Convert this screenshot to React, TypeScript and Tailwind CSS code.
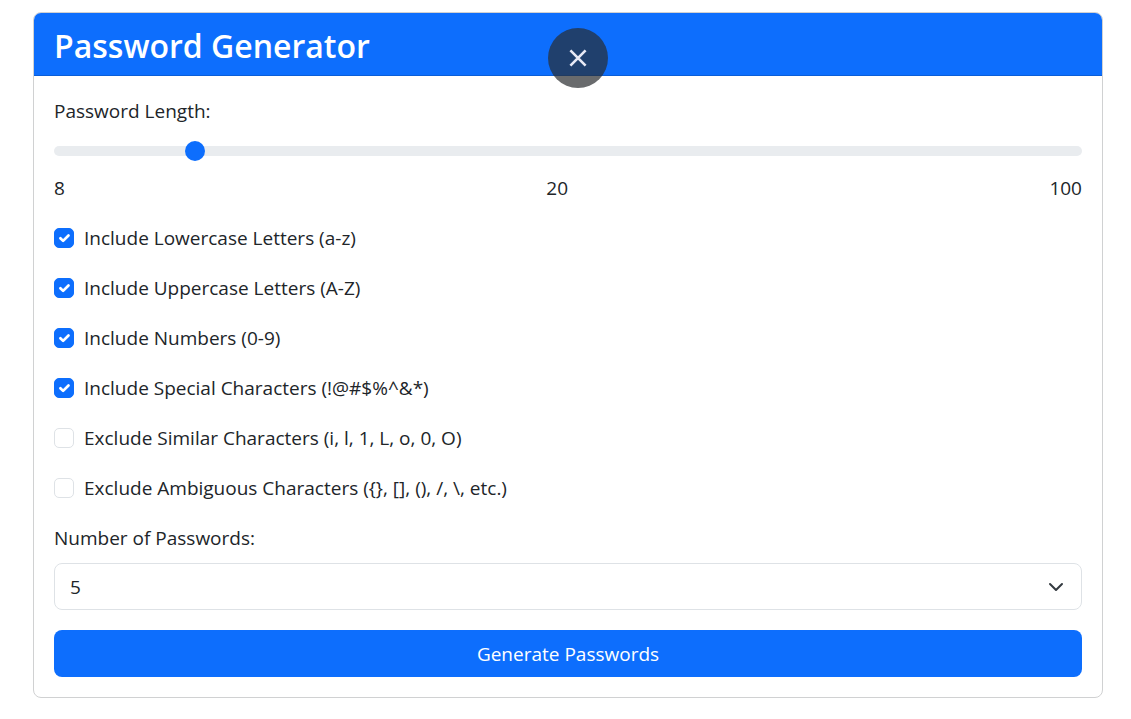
import { useState } from "react";

type Option = { id: string; label: string; checked: boolean };

const OPTIONS: Option[] = [
  { id: "lowercase", label: "Include Lowercase Letters (a-z)", checked: true },
  { id: "uppercase", label: "Include Uppercase Letters (A-Z)", checked: true },
  { id: "numbers", label: "Include Numbers (0-9)", checked: true },
  { id: "special", label: "Include Special Characters (!@#$%^&*)", checked: true },
  { id: "similar", label: "Exclude Similar Characters (i, l, 1, L, o, 0, O)", checked: false },
  { id: "ambiguous", label: "Exclude Ambiguous Characters ({}, [], (), /, \\, etc.)", checked: false },
];

function CheckRow({ id, label, checked }: Option) {
  return (
    <div className="flex items-center gap-[10px]">
      <span className="grid size-5 shrink-0">
        <input
          id={id}
          type="checkbox"
          defaultChecked={checked}
          className="peer col-start-1 row-start-1 size-5 appearance-none rounded-[5px] border border-[#dee2e6] bg-white checked:border-[#0d6efd] checked:bg-[#0d6efd]"
        />
        <svg
          viewBox="0 0 20 20"
          fill="none"
          aria-hidden="true"
          className="pointer-events-none invisible col-start-1 row-start-1 size-5 peer-checked:visible"
        >
          <path
            d="m6.4 10.2 2.7 2.7 5.4-5.4"
            stroke="white"
            strokeWidth="2.7"
            strokeLinecap="round"
            strokeLinejoin="round"
          />
        </svg>
      </span>
      <label htmlFor={id} className="leading-[30px]">
        {label}
      </label>
    </div>
  );
}

export default function App() {
  const [length, setLength] = useState(20);

  return (
    <div className="relative pt-3 pr-7 pb-5 pl-[33px] font-['Open_Sans','Noto_Sans',sans-serif] text-[19px] leading-[30px] text-[#212529]">
      <main className="overflow-hidden rounded-lg border border-[#d0d1d2] bg-white">
        <header className="border-b border-[#0b5ed7] bg-[#0d6efd] px-5 pt-3 pb-2 text-white">
          <h1 className="text-[32px] leading-[42px] font-semibold">Password Generator</h1>
        </header>
        <form className="flex flex-col gap-5 p-5" onSubmit={(e) => e.preventDefault()}>
          <div className="flex flex-col">
            <label htmlFor="length">Password Length:</label>
            <input
              id="length"
              type="range"
              min={8}
              max={100}
              value={length}
              onChange={(e) => setLength(Number(e.target.value))}
              className="mt-[10px] mb-[7px] h-[30px] w-full appearance-none bg-transparent [&::-webkit-slider-runnable-track]:h-[10px] [&::-webkit-slider-runnable-track]:rounded-full [&::-webkit-slider-runnable-track]:bg-[#e9ecef] [&::-webkit-slider-thumb]:-mt-[5px] [&::-webkit-slider-thumb]:size-5 [&::-webkit-slider-thumb]:appearance-none [&::-webkit-slider-thumb]:rounded-full [&::-webkit-slider-thumb]:bg-[#0d6efd]"
            />
            <div className="flex justify-between">
              <span>8</span>
              <output htmlFor="length">{length}</output>
              <span>100</span>
            </div>
          </div>
          {OPTIONS.map((option) => (
            <CheckRow key={option.id} {...option} />
          ))}
          <div className="flex flex-col gap-[10px]">
            <label htmlFor="count">Number of Passwords:</label>
            <div className="grid items-center">
              <select
                id="count"
                defaultValue="5"
                className="col-start-1 row-start-1 h-[47px] w-full appearance-none rounded-lg border border-[#dee2e6] bg-white pr-12 pl-[15px]"
              >
                <option>1</option>
                <option>5</option>
                <option>10</option>
                <option>20</option>
              </select>
              <svg
                viewBox="0 0 16 16"
                fill="none"
                aria-hidden="true"
                className="pointer-events-none col-start-1 row-start-1 mr-[18px] size-4 justify-self-end"
              >
                <path
                  d="m2 5 6 6 6-6"
                  stroke="#343a40"
                  strokeWidth="2"
                  strokeLinecap="round"
                  strokeLinejoin="round"
                />
              </svg>
            </div>
          </div>
          <button type="submit" className="h-[47px] rounded-lg bg-[#0d6efd] text-white">
            Generate Passwords
          </button>
        </form>
      </main>
      <button
        type="button"
        aria-label="Close"
        className="absolute top-7 left-[548px] grid size-[60px] place-items-center rounded-full bg-[#2a2c2f]/70"
      >
        <svg viewBox="0 0 20 20" fill="none" aria-hidden="true" className="size-5">
          <path d="m2.4 2.4 15.2 15.2M17.6 2.4 2.4 17.6" stroke="#e8eaf6" strokeWidth="2.6" />
        </svg>
      </button>
    </div>
  );
}
